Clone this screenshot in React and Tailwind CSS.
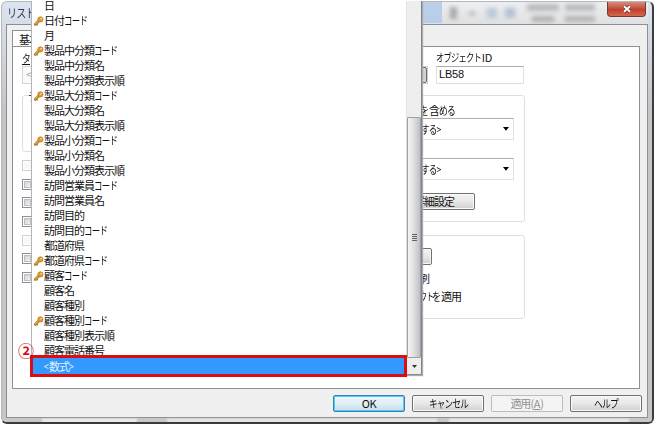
import React from "react";

const ROWS = [
  ["日"],
  ["日付", "コード", true],
  ["月"],
  ["製品中分類", "コード", true],
  ["製品中分類名"],
  ["製品中分類表示順"],
  ["製品大分類", "コード", true],
  ["製品大分類名"],
  ["製品大分類表示順"],
  ["製品小分類", "コード", true],
  ["製品小分類名"],
  ["製品小分類表示順"],
  ["訪問営業員", "コード"],
  ["訪問営業員名"],
  ["訪問目的"],
  ["訪問目的", "コード"],
  ["都道府県"],
  ["都道府県", "コード", true],
  ["顧客", "コード", true],
  ["顧客名"],
  ["顧客種別"],
  ["顧客種別", "コード", true],
  ["顧客種別表示順"],
  ["顧客電話番号"],
];

function Key() {
  return (
    <svg viewBox="0 0 10 10" className="h-[10px] w-[10px]">
      <path d="M1.2 8.4 L5 4.8" stroke="#a87522" strokeWidth="2.8" strokeLinecap="round" />
      <path d="M1.4 8 L5.4 4.2" stroke="#e0a63c" strokeWidth="1.5" strokeLinecap="round" />
      <path d="M2.6 8.2 L3.8 9.2" stroke="#a87522" strokeWidth="1.4" />
      <circle cx="6.4" cy="3.4" r="2.6" fill="#dc9c32" stroke="#b17a24" strokeWidth=".7" />
      <circle cx="7.1" cy="2.7" r=".8" fill="#fff0c8" />
    </svg>
  );
}

// Text squeezed horizontally into a box of a given width, as the proportional kana of the dialog font are.
function Narrow({ box, scale, children }) {
  return (
    <span className={`inline-block whitespace-nowrap ${box}`}>
      <span className={`inline-block origin-left ${scale}`}>{children}</span>
    </span>
  );
}

function Check({ light }) {
  return (
    <div className={`h-[11px] w-[11px] border p-px ${light ? "border-[#d0d0d0] bg-white" : "border-[#8e8f8f] bg-white"}`}>
      <div className={`h-full w-full ${light ? "bg-[#f8f8f8]" : "border border-[#b9bfc6] bg-gradient-to-br from-[#cdd1d6] to-[#f4f4f4]"}`} />
    </div>
  );
}

function Select() {
  return (
    <div className="flex h-[22px] w-[242px] items-center justify-end border border-[#dde2e8] border-t-[#abadb3] pr-[4px]">
      <span className="mr-[61px] flex">
        <span>利用</span>
        <Narrow box="w-[21px]" scale="scale-x-[.78]">する&gt;</Narrow>
      </span>
      <svg viewBox="0 0 6 4" className="h-[4px] w-[6px]"><path d="M0 0H6L3 3.8Z" fill="#000" /></svg>
    </div>
  );
}

const BTN = "flex items-center justify-center rounded-[2px] border border-[#707070] bg-gradient-to-b from-[#f3f3f3] via-[#e8e8e8] to-[#cfcfcf] shadow-[inset_0_0_0_1px_#fafafa]";

function Popup() {
  return (
    <div className="absolute left-[31px] top-px z-10 flex h-[374px] w-[391px] border-b border-l border-r border-b-[#8c8c8c] border-l-[#b4b4b8] border-r-[#858589] bg-white shadow-[1px_1px_1px_#aaa]">
      <div className="flex w-[374px] flex-col">
        <div className="-mt-[3px]">
          {ROWS.map(([text, kana, key]) => (
            <div key={text + (kana || "")} className="flex h-[15px] items-center pl-[2px]">
              <div className="w-[10px]">{key && <Key />}</div>
              <span>{text}</span>
              {kana && <Narrow box="w-[23px]" scale="scale-x-[.77]">{kana}</Narrow>}
            </div>
          ))}
        </div>
        <div className="flex h-[16px] items-center bg-[#3399ff] pl-[12px] text-[#e4f2ff]">
          <Narrow box="w-[5px]" scale="scale-x-[.8]">&lt;</Narrow>
          <span>数式</span>
          <Narrow box="w-[5px]" scale="scale-x-[.8]">&gt;</Narrow>
        </div>
      </div>
      <div className="flex w-[15px] flex-col border-l border-[#e2e2e2] bg-[#eeeeee]">
        <div className="h-[116px]" />
        <div className="flex h-[241px] flex-col items-center justify-center gap-px rounded-[1px] border border-[#a0a0a0] bg-gradient-to-r from-[#f4f4f4] via-[#dedfe2] to-[#bfc0c5]">
          {[0, 1, 2, 3].map((n) => <div key={n} className="h-px w-[5px] bg-[#62656b]" />)}
        </div>
        <div className="flex flex-1 items-center justify-center">
          <svg viewBox="0 0 5 3" className="h-[3px] w-[5px]"><path d="M0 0H5L2.5 3Z" fill="#333" /></svg>
        </div>
      </div>
    </div>
  );
}

export default function App() {
  return (
    <div className="relative h-[425px] w-[655px] overflow-hidden bg-white font-['Noto_Sans_CJK_JP',sans-serif] text-[11px] leading-[15px] tracking-[-1px] text-[#111]">
      <div className="flex h-[424px] w-[654px] flex-col pl-px pt-px">
        <div className="flex h-[423px] w-[653px] flex-col overflow-hidden rounded-[6px] border border-b-2 border-r-2 border-[#b8b8b8] border-b-[#393b3d] border-r-[#3a3c3f] bg-gradient-to-b from-[#dbe5f1] via-[#c4c5c7] via-25% to-[#c6c6c6] px-[4px]">
          <div className="flex h-[22px] shrink-0 justify-between overflow-hidden">
            <div className="-ml-px pl-[2px] text-[12px] leading-[21px] text-[#333a46]">
              <Narrow box="w-[24px]" scale="scale-x-[.84]">リスト</Narrow>
            </div>
            <div className="-mr-[4px] flex h-[22px] w-[232px] items-start bg-gradient-to-b from-[#eceff2] to-[#e0e0e1]">
              <div className="h-[21px] w-[22px] bg-[#b8cee9]" />
              <div className="flex w-[170px] items-center gap-[12px] pl-[8px] pt-[2px] blur-[2px]">
                <div className="h-[12px] w-[7px] bg-[#a6a9ad]" />
                <div className="h-[3px] w-[6px] bg-[#aaa]" />
                <div className="h-[10px] w-[10px] bg-[#bac8d9]" />
                <div className="-ml-[4px] h-[10px] w-[10px] bg-[#b3c1d2]" />
                <div className="grid grid-cols-2 gap-x-[6px] gap-y-[5px]">
                  <div className="h-[7px] w-[32px] bg-[#b9babd]" />
                  <div className="h-[7px] w-[30px] bg-[#bbbbbd]" />
                  <div className="ml-[5px] h-[6px] w-[22px] bg-[#b2b2b4]" />
                  <div className="h-[6px] w-[30px] bg-[#b5b5b6]" />
                </div>
              </div>
              <div className="-ml-[5px] flex h-[15px] w-[39px] items-center justify-center rounded-b-[4px] border border-t-0 border-[#733b36] bg-gradient-to-b from-[#d98b7b] via-[#bf412c] via-55% to-[#d5674b]">
                <svg viewBox="0 0 10 8" className="h-[8px] w-[10px]">
                  <path d="M2 1.3L8 6.7M8 1.3L2 6.7" stroke="#683632" strokeWidth="3.2" />
                  <path d="M2 1.3L8 6.7M8 1.3L2 6.7" stroke="#fff" strokeWidth="2" />
                </svg>
              </div>
            </div>
          </div>
          <div className="flex h-[394px] w-[642px] flex-col border border-[#8c8e92] bg-[#f0f0f0] pl-[5px]">
            <div className="mt-[5px] flex h-[17px] w-[64px] items-center border border-b-0 border-[#8d9097] bg-white pl-[6px]">
              基本
            </div>
            <div className="-mt-px flex h-[343px] w-[628px] border border-[#8d9097] bg-white">
              <div className="w-[260px] pl-[9px] pt-[4px]">
                <div className="h-[15px]">
                  <Narrow box="w-[30px]" scale="scale-x-[.8]"><u>タ</u>イプ</Narrow>
                </div>
                <div className="h-[18px] w-[200px] border border-[#d6d6d6] bg-[#fafafa] pl-[3px] text-[#aaa]">&lt;</div>
                <div className="mt-[11px] flex h-[57px] w-[220px] rounded-[3px] border border-[#d9dfe4]">
                  <div className="-mt-[7px] ml-[5px] h-[15px] bg-white">データ</div>
                </div>
                <div className="mt-[8px] flex flex-col gap-[7.7px]">
                  <Check light /><Check /><Check /><Check /><Check light /><Check /><Check />
                </div>
              </div>
              <div className="w-[252px] pt-[3px]">
                <div className="flex h-[15px] justify-end pr-[33px]">
                  <Narrow box="w-[46px]" scale="scale-x-[.75]">オブジェクト</Narrow>
                  <span className="tracking-[-.3px]">ID</span>
                </div>
                <div className="mt-px flex h-[18px] justify-end gap-[8px] pr-px">
                  <div className="flex w-[145px] justify-end border border-[#c9cdd3]"><div className="w-[15px] rounded-[2px] border border-[#707070] bg-[#d2d2d2]" /></div>
                  <div className="w-[88px] border border-[#dde1e6] border-t-[#abadb3] pl-[2px] font-['Liberation_Sans',sans-serif] text-[11px] leading-[15px] tracking-[-.2px]">LB58</div>
                </div>
                <div className="mt-[11px] flex h-[127px] flex-col items-end rounded-[3px] border border-[#d9e1e6] pr-[10px] pt-[7px]">
                  <div className="mr-[59px] flex h-[15px]"><span>値</span><Narrow box="w-[9px]" scale="scale-x-[.82]">を</Narrow><span>含</span><Narrow box="w-[16px]" scale="scale-x-[.8]">める</Narrow></div>
                  <Select />
                  <div className="mt-[18px]"><Select /></div>
                  <div className={`mr-[39px] mt-[13px] h-[17px] w-[82px] ${BTN} justify-end pr-[20px]`}>詳細設定</div>
                </div>
                <div className="mt-[13px] flex h-[84px] flex-col items-end rounded-[3px] border border-[#d9e1e6] pt-[12px]">
                  <div className={`mr-[92px] h-[17px] w-[80px] ${BTN}`} />
                  <div className="mr-[95px] mt-[6px] h-[15px]">印刷</div>
                  <div className="mr-[63px] mt-[3px] flex h-[15px]">
                    <Narrow box="w-[13px]" scale="scale-x-[.72]">ウト</Narrow>
                    <Narrow box="w-[9px]" scale="scale-x-[.82]">を</Narrow>
                    <span>適用</span>
                  </div>
                </div>
              </div>
            </div>
            <div className="mt-[6px] flex gap-[7px] pl-[321px]">
              <div className="flex h-[17px] w-[72px] items-center justify-center rounded-[2px] border border-[#3c7fb1] bg-gradient-to-b from-[#edf5f9] via-[#e2eff6] to-[#c4deea] pb-px tracking-[-.5px] shadow-[inset_0_0_0_1px_#48d0f3]">OK</div>
              <div className={`h-[17px] w-[72px] ${BTN} pb-px`}><Narrow box="w-[38px]" scale="scale-x-[.78]">キャンセル</Narrow></div>
              <div className="flex h-[17px] w-[72px] items-center justify-center rounded-[2px] border border-[#bcbcbc] bg-[#f4f4f4] pb-px text-[#929292]"><span>適用</span><span className="tracking-[-.3px]">(<u>A</u>)</span></div>
              <div className={`h-[17px] w-[72px] ${BTN} pb-px`}><Narrow box="w-[24px]" scale="scale-x-[.8]">ヘルプ</Narrow></div>
            </div>
          </div>
          <div className="-mx-[4px] flex flex-1 items-end bg-[#c8c8c8]">
            <div className="ml-[40px] h-[3px] w-[95px] bg-[#f4f4f4] blur-[1px]" />
            <div className="ml-[30px] h-[3px] w-[270px] bg-[#ededed] blur-[1px]" />
            <div className="ml-[12px] h-[3px] w-[180px] bg-[#f2f2f2] blur-[1px]" />
          </div>
        </div>
      </div>
      <Popup />
      <div className="absolute left-[30px] top-[355px] z-20 h-[22px] w-[377px] border-[3px] border-[#dd0b12]" />
      <div className="absolute left-[18px] top-[342px] z-20 flex h-[16px] w-[16px] items-center justify-center text-[16px] font-bold leading-[16px] tracking-normal text-[#d40f16]">②</div>
    </div>
  );
}
